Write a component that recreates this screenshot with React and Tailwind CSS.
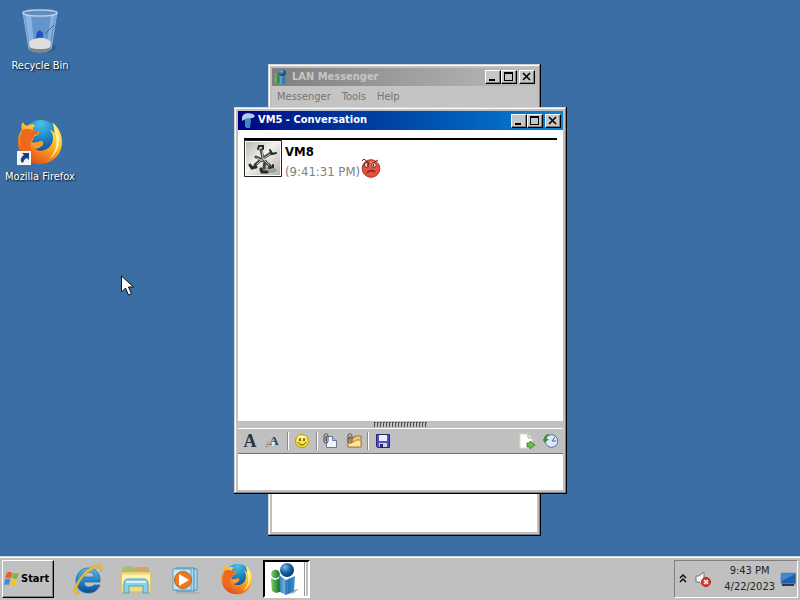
import React from "react";

function Firefox({ className }) {
  return (
    <svg viewBox="0 0 48 48" className={className} aria-hidden="true">
      <defs>
        <radialGradient id="ffGlobe" cx="0.5" cy="0.1" r="0.9">
          <stop offset="0" stopColor="#4fc0e8" />
          <stop offset="0.5" stopColor="#1b7fc0" />
          <stop offset="1" stopColor="#0c3f86" />
        </radialGradient>
        <linearGradient id="ffTail" x1="0.8" y1="0" x2="0.2" y2="1">
          <stop offset="0" stopColor="#fff27a" />
          <stop offset="0.4" stopColor="#fdb52b" />
          <stop offset="0.75" stopColor="#f0701c" />
          <stop offset="1" stopColor="#d8401b" />
        </linearGradient>
      </defs>
      <circle cx="25" cy="20" r="19" fill="url(#ffGlobe)" />
      <path d="M37 4c6 4 10 12 10 20 0 13-10 23-23 23S1 37 1 25c0-6 1-10 4-14-1-3 0-6 1-8 1 2 3 4 5 4 3-2 6-2 8 0-2 1-3 3-2 5l6 1c1 2-1 4-5 5-1 3-1 5-3 6 3 2 7 0 10-1 2 0 3 2 2 4-3 2-4 4-8 4 5 4 12 2 16-3 4-5 3-13-1-17 2 1 4 2 5 4 0-4-1-8-2-11z" fill="url(#ffTail)" />
      <path d="M39 7c4 5 6 11 5 18-1 8-5 13-11 17 6-6 9-13 8-21z" fill="#fff08a" />
      <path d="M5 12c4-2 9-2 12 0l6 1c0 2-2 4-5 4-1 3-2 5-3 6-3 4-1 10 4 13-9-1-15-7-16-14z" fill="#ee681f" />
      <path d="M15 24c4 2 7 0 10-1 2 0 3 2 2 4-3 2-5 4-9 3z" fill="#f99a31" />
    </svg>
  );
}

function RecycleBin() {
  return (
    <svg viewBox="0 0 40 46" className="h-[46px] w-10" aria-hidden="true">
      <ellipse cx="25" cy="40" rx="12" ry="4" fill="#24507f" opacity=".5" />
      <path d="M3 4l6 37c5 4 17 4 22 0l6-37z" fill="#6594cb" stroke="#94b8de" />
      <path d="M5 7l4 27h5L11 7z" fill="#9bc2e8" opacity=".7" />
      <path d="M31 7l-4 27h3l5-27z" fill="#a7cae9" opacity=".55" />
      <path d="M16 30l1-6 3-2 3 3v5z" fill="#1e51c4" />
      <path d="M25 26l9-9" stroke="#356ea9" />
      <path d="M9 34c3-4 6-2 9-4 5-1 10 1 13 4l-1 7c-5 3-15 3-20 0z" fill="#dcdedb" />
      <path d="M9 39c6 3 16 3 22 0l-1 3c-5 3-15 3-20 0z" fill="#7d8580" />
      <ellipse cx="20" cy="5" rx="17" ry="3" fill="#5f8cbd" stroke="#b9d0e6" strokeWidth="1.500" />
    </svg>
  );
}

function People({ className }) {
  return (
    <svg viewBox="0 0 34 34" className={className} aria-hidden="true">
      <defs>
        <linearGradient id="pBlue"><stop stopColor="#2c79b6" /><stop offset=".35" stopColor="#6bb4e2" /><stop offset=".6" stopColor="#2474b5" /><stop offset="1" stopColor="#3f92cb" /></linearGradient>
        <radialGradient id="pHead" cx=".35" cy=".3" r=".75"><stop stopColor="#79bde8" /><stop offset=".5" stopColor="#1d67a8" /><stop offset="1" stopColor="#0b3563" /></radialGradient>
        <linearGradient id="pGreen"><stop stopColor="#7ccc62" /><stop offset=".5" stopColor="#43a344" /><stop offset="1" stopColor="#1b6830" /></linearGradient>
      </defs>
      <path d="M18 32l6-4 6-1-5 4z" fill="#777" opacity=".6" />
      <path d="M2 16l4 2 5-2v14l-4 1-4-2z" fill="url(#pGreen)" />
      <circle cx="6.500" cy="12" r="4.300" fill="url(#pGreen)" />
      <path d="M10 13l7 5 9-4-1 15-8 4-6-3z" fill="url(#pBlue)" />
      <path d="M17 18v15" stroke="#164e85" opacity=".7" />
      <circle cx="18" cy="8" r="7" fill="url(#pHead)" />
    </svg>
  );
}

function ChatIcon() {
  return (
    <svg viewBox="0 0 16 16" className="size-4" aria-hidden="true">
      <path d="M5 7l2 1 4-1-1 8H7l-2-1z" fill="#3f86c8" />
      <circle cx="7.500" cy="5" r="3.500" fill="#4d8ccb" />
      <path d="M2 4l2-3 4-1 5 1 2 2-2 2-5 0-3 1-3 2z" fill="#b3c9e6" />
    </svg>
  );
}

function CaptionButton({ label, children }) {
  return (
    <button aria-label={label} className="flex h-[14px] w-4 items-center justify-center border border-t-white border-l-white border-r-black border-b-black bg-[#c6c6c6] shadow-[inset_-1px_-1px_#808080]">
      <svg viewBox="0 0 12 10" className="h-[10px] w-3" fill="none" stroke="#000" shapeRendering="crispEdges" aria-hidden="true">{children}</svg>
    </button>
  );
}

function CaptionButtons() {
  return (
    <div className="ml-auto flex pr-0.5">
      <CaptionButton label="Minimize"><path d="M2 8h6" strokeWidth="2" /></CaptionButton>
      <CaptionButton label="Maximize"><path d="M1.500 1v7.500h8V1" /><path d="M1 1h9" strokeWidth="2" /></CaptionButton>
      <div className="w-0.5" />
      <CaptionButton label="Close"><path d="M2 1l7 7M9 1L2 8" strokeWidth="1.600" shapeRendering="auto" /></CaptionButton>
    </div>
  );
}

const frame = "absolute flex flex-col bg-[#c0c0c0] p-1 shadow-[inset_-1px_-1px_#000,inset_1px_1px_#d4d4d4,inset_-2px_-2px_#808080,inset_2px_2px_#fff]";

function MainWindow() {
  return (
    <section className={`${frame} left-[268px] top-[64px] h-[472px] w-[273px]`}>
      <header className="flex h-[18px] shrink-0 items-center gap-0.5 bg-linear-to-r from-[#808080] to-[#bcbcbc] pl-0.5 text-[11px] font-bold text-[#c6c6c6]">
        <People className="size-4" />
        <h2>LAN Messenger</h2>
        <CaptionButtons />
      </header>
      <nav className="flex h-[22px] shrink-0 items-center gap-[11px] bg-[#c4c4c4] pl-[5px] text-[11px] text-[#77736f]">
        <button>Messenger</button>
        <button>Tools</button>
        <button>Help</button>
      </nav>
      <div className="flex-1 bg-white" />
    </section>
  );
}

function Avatar() {
  return (
    <svg viewBox="0 0 38 38" className="size-[38px] shrink-0" aria-hidden="true">
      <defs><linearGradient id="avBg" x2="1" y2="1"><stop stopColor="#b7b7b3" /><stop offset=".45" stopColor="#f0f0ed" /><stop offset="1" stopColor="#b5b3ae" /></linearGradient></defs>
      <path d="M.5.5h37v36H.5z" fill="#fff" stroke="#222" />
      <path d="M2 2h34v33H2z" fill="url(#avBg)" />
      <ellipse cx="24" cy="30" rx="9" ry="3" fill="#77756e" opacity=".5" />
      <g fill="none" strokeLinecap="round">
        <path d="M17 10l2 8-8 7M27 13l-9 6 8 7M12 17l9 4-1 7" stroke="#45443e" strokeWidth="3" />
        <path d="M18 11l1 7-6 6M26 14l-7 5 6 6M13 18l6 3" stroke="#c4c1b5" />
        <path d="M14 9l1-3 4 0v3" stroke="#292926" strokeWidth="2" />
        <path d="M26 10l2 4 4-1" stroke="#292926" strokeWidth="2" />
        <path d="M6 25l2 3 4-1" stroke="#292926" strokeWidth="3" />
        <path d="M17 29l1 3 5 0" stroke="#292926" strokeWidth="3" />
        <path d="M25 28l4-1v-2" stroke="#292926" strokeWidth="2" />
      </g>
    </svg>
  );
}

function Angry() {
  return (
    <svg viewBox="0 0 20 20" className="size-5" role="img" aria-label="Angry">
      <circle cx="10" cy="10.500" r="8.800" fill="#e5523d" stroke="#b62b20" />
      <ellipse cx="12" cy="6" rx="5" ry="3" fill="#fa9780" opacity=".6" />
      <path d="M1 3l2-2 6 5M12 5l5-3" stroke="#55221c" fill="none" />
      <circle cx="5.500" cy="7" r="2.300" fill="#f3d8d2" stroke="#60241d" /><circle cx="13" cy="7" r="2.300" fill="#f3d8d2" stroke="#60241d" />
      <path d="M6 7h1M12 7h1" stroke="#111" strokeWidth="1.500" />
      <path d="M6 15c2-3 6-3 8-1" stroke="#54201b" strokeWidth="1.300" fill="none" />
    </svg>
  );
}

function Tool({ label, children, className = "" }) {
  return (
    <button aria-label={label} className={`flex size-6 items-center justify-center ${className}`}>
      <svg viewBox="0 0 16 16" className="size-4" aria-hidden="true">{children}</svg>
    </button>
  );
}

function Divider() {
  return <div className="mx-0.5 h-[18px] w-px bg-white shadow-[-1px_0_#8a8a8a]" />;
}

const clip = <path d="M2 3v5c0 3 4 3 4 0V3c0-3-4-3-4 0M4 3v5" fill="none" stroke="#4b4b4b" />;

function Toolbar() {
  return (
    <div className="flex h-[26px] shrink-0 items-center border-t border-b border-t-white border-b-[#707070]">
      <button aria-label="Font" className="h-6 w-6 font-[Liberation_Serif,serif] text-[18px] leading-6 font-bold text-[#2c3444]">A</button>
      <button aria-label="Font colour" className="relative h-6 w-6 font-[Liberation_Serif,serif] text-[13px] leading-5 font-bold text-[#29464d]">
        <svg viewBox="0 0 24 24" className="absolute inset-0 size-6" aria-hidden="true"><path d="M3 18l3-6 2 1-3 6z" fill="#ca9776" /><path d="M7 14l3-4 5 5-4 3-4-2z" fill="#dce9f3" stroke="#7f9ba9" strokeWidth=".6" /></svg>
        <span className="relative">A</span>
      </button>
      <Divider />
      <Tool label="Smileys">
        <circle cx="7" cy="8" r="6.500" fill="#ffe438" stroke="#b39a14" />
        <ellipse cx="7" cy="4.500" rx="4" ry="2" fill="#fff8a9" />
        <path d="M5 5v3M9 5v3" stroke="#3f3710" strokeWidth="1.300" /><path d="M3 9c2 4 6 4 8 0" fill="none" stroke="#5e480e" />
      </Tool>
      <Divider />
      <div className="flex">
        <Tool label="Send file" className="-ml-0.5">
          <path d="M4.500 3.500h6l4 4v7h-10z" fill="#eef3ff" stroke="#6d7697" /><path d="M10.500 3.500v4h4" fill="#b8c5e4" stroke="#6d7697" />{clip}
        </Tool>
        <Tool label="Send folder">
          <path d="M2 5h6l1-2h6v11H2z" fill="#f4cc71" stroke="#9a742c" /><path d="M2 9h6l2-2h5v7H2z" fill="#ffe29a" stroke="#a88640" />{clip}
        </Tool>
      </div>
      <Divider />
      <Tool label="Save conversation">
        <path d="M1.500 1.500h13v13h-12l-1-1z" fill="#4c50c4" stroke="#25276f" /><path d="M4 2h8v6H4z" fill="#eef1fb" /><path d="M4 10h8v4H4z" fill="#d0d3e3" /><path d="M5 11h3v3H5z" fill="#27295f" />
      </Tool>
      <Tool label="Send" className="ml-auto">
        <path d="M1 1h8l4 4v10H1z" fill="#fff" stroke="#d1dfc6" /><path d="M9 1v4h4" fill="#e7ece4" stroke="#a7b19d" /><path d="M8 10h3V8l5 4-5 4v-2H8z" fill="#68c34c" stroke="#2c7c24" strokeWidth=".8" />
      </Tool>
      <Tool label="History">
        <circle cx="8.500" cy="8" r="6.300" fill="#dbe8fb" stroke="#5f6fa3" /><path d="M12 4L9 8h4" fill="none" stroke="#4166a7" /><path d="M7 1C3 1 1 3 1 6H-1l3 4 4-4H4c0-2 0-4 3-5z" fill="#478c38" />
      </Tool>
    </div>
  );
}

function ConversationWindow() {
  return (
    <section className={`${frame} left-[234px] top-[107px] h-[387px] w-[333px]`}>
      <header className="flex h-[19px] shrink-0 items-center gap-0.5 bg-linear-to-r from-[#000082] via-[#0047a8] to-[#1082d2] pl-0.5 text-[11px] font-bold text-white">
        <ChatIcon />
        <h1>VM5 - Conversation</h1>
        <CaptionButtons />
      </header>
      <div className="flex-1 bg-white px-1.5 pt-2">
        <div className="flex gap-[3px] border-t-2 border-black">
          <Avatar />
          <div className="pt-1 text-[13px] leading-4">
            <p className="font-bold text-black">VM8</p>
            <p className="flex items-start gap-px text-[#808080]"><span className="pt-1">(9:41:31 PM)</span><span className="-mt-0.5"><Angry /></span></p>
          </div>
        </div>
      </div>
      <div className="flex h-[7px] shrink-0 items-center justify-center">
        <svg viewBox="0 0 54 5" className="h-[5px] w-[54px]" aria-hidden="true">
          <path d="M0 2.500h54" stroke="#4e4e4e" strokeWidth="5" strokeDasharray="1 2" /><path d="M1 .5h53" stroke="#555" strokeDasharray="1 2" />
        </svg>
      </div>
      <Toolbar />
      <textarea aria-label="Message" className="block h-9 shrink-0 resize-none bg-white outline-none" />
    </section>
  );
}

function DesktopIcon({ label, children }) {
  return (
    <button className="flex w-20 flex-col items-center gap-1 text-[11px] leading-4 text-white [text-shadow:1px_1px_2px_#000]">
      {children}
      <span className="whitespace-nowrap">{label}</span>
    </button>
  );
}

function Taskbar() {
  return (
    <footer className="flex h-11 shrink-0 items-start border-t border-[#d4d4d4] bg-[#c0c0c0] px-0.5 pt-[3px] shadow-[inset_0_1px_#fff]">
      <button className="flex h-[38px] w-[52px] items-center gap-px border border-t-white border-l-white border-r-black border-b-black pl-px text-[11px] font-bold text-black shadow-[inset_-1px_-1px_#808080]">
        <svg viewBox="0 0 17 17" className="size-4" aria-hidden="true">
          <path d="M3 2c2-2 4-1 6 0L7 8C5 7 3 7 1 8z" fill="#e96128" /><path d="M10 2c2 1 4 1 6 0l-2 6c-2 1-4 0-6-1z" fill="#81b83b" /><path d="M1 9c2-1 4-1 6 0l-2 6c-2-1-3-1-5 0z" fill="#438bd0" /><path d="M8 9c2 1 4 1 6 0l-2 6c-2 1-4 0-6-1z" fill="#f2c331" />
        </svg>
        Start
      </button>
      <div className="flex items-center pl-[18px]">
        <button aria-label="Internet Explorer" className="mr-4 h-[38px] w-8">
          <svg viewBox="0 0 32 32" className="size-8" aria-hidden="true">
            <defs><linearGradient id="ie" x2="0" y2="1"><stop stopColor="#56baf0" /><stop offset=".6" stopColor="#197ac8" /><stop offset="1" stopColor="#0c4b8d" /></linearGradient></defs>
            <path d="M28 19H12c0 3 2 5 5 5 2 0 4-1 5-2h6c-2 5-6 8-12 8C9 30 4 25 4 18S9 5 16 5s13 5 12 14zM12 14h10c0-3-2-5-5-5s-5 2-5 5z" fill="url(#ie)" stroke="#176aa7" strokeWidth=".7" />
            <path d="M8 29c-5 4-8 1-4-8C10 10 20 1 28 2c4 1 2 5 1 7 0-3-1-5-4-4C18 6 10 14 6 22c-2 5-2 7 2 7z" fill="#edbd36" stroke="#d49b22" strokeWidth=".5" />
          </svg>
        </button>
        <button aria-label="Windows Explorer" className="mr-[19px] h-[38px] w-8">
          <svg viewBox="0 0 32 32" className="size-8" aria-hidden="true">
            <path d="M2 5l3-2h7l2 2h15v4H2z" fill="#a9bd73" /><path d="M15 4h13v5H15z" fill="#d4a367" /><path d="M1 9h30v20H1z" fill="#f1dc86" stroke="#d5b966" /><path d="M2 12h28v9H2z" fill="#fff2ae" />
            <path d="M4 30V20c0-3 2-4 5-4h14c3 0 5 1 5 4v10h-5v-7H9v7z" fill="#8bd0e9" stroke="#509fc1" /><path d="M6 19h20" stroke="#d0f2fc" strokeWidth="2" />
          </svg>
        </button>
        <button aria-label="Windows Media Player" className="mr-5 h-[38px] w-[30px]">
          <svg viewBox="0 0 30 32" className="h-8 w-[30px]" aria-hidden="true">
            <path d="M8 6h18v21H8z" fill="#b8dff1" stroke="#4998c1" /><path d="M5 5h18v23H5z" fill="#a8d6ec" stroke="#3c89b4" /><path d="M2 6h18v21H2z" fill="#c5e7f5" stroke="#5ba3c5" /><circle cx="12" cy="17" r="8.500" fill="#ed7a22" stroke="#c85c10" /><path d="M8 11v12l10-6z" fill="#fff" /><path d="M5 30h23" stroke="#90a9b4" />
          </svg>
        </button>
        <button aria-label="Mozilla Firefox" className="mr-2.5 h-[38px] w-8"><Firefox className="size-8" /></button>
        <button aria-label="LAN Messenger" className="h-[38px] w-[47px] border-2 border-r-white border-b-white border-t-black border-l-black bg-white pl-1 shadow-[inset_-2px_0_#c0c0c0,inset_-3px_0_#fff,inset_-4px_0_#999]"><People className="size-[34px]" /></button>
      </div>
      <div className="ml-auto flex h-[38px] w-[124px] items-center border border-t-[#808080] border-l-[#808080] border-r-white border-b-white text-[11px] leading-4 text-[#242424]">
        <button aria-label="Show hidden icons" className="ml-1 w-2">
          <svg viewBox="0 0 8 10" className="h-[10px] w-2" fill="none" stroke="#111" strokeWidth="1.500" aria-hidden="true"><path d="M1 4l3-3 3 3M1 8l3-3 3 3" /></svg>
        </button>
        <button aria-label="Volume: muted" className="ml-2 w-4">
          <svg viewBox="0 0 16 16" className="size-4" aria-hidden="true"><path d="M1 5h3l5-4v14l-5-4H1z" fill="#f5f5f5" stroke="#777" /><circle cx="11" cy="11" r="4.500" fill="#dc3b35" stroke="#b51d1d" /><path d="M9 9l4 4M13 9l-4 4" stroke="#fff" strokeWidth="1.500" /></svg>
        </button>
        <div className="ml-auto text-center whitespace-nowrap"><p>9:43 PM</p><p>4/22/2023</p></div>
        <button aria-label="Show desktop" className="mr-px ml-[5px] w-4">
          <svg viewBox="0 0 16 16" className="size-4" aria-hidden="true"><path d="M1 2h15v11H1z" fill="#225fae" stroke="#749bc5" /><path d="M2 3h13L2 10z" fill="#4387d0" /><path d="M2 13h12v2H2z" fill="#263b52" /></svg>
        </button>
      </div>
    </footer>
  );
}

export default function App() {
  return (
    <div className="flex h-screen flex-col overflow-hidden bg-[#3a6ea5] font-['Tahoma','DejaVu_Sans_Condensed','Noto_Sans',sans-serif]">
      <main className="relative min-h-0 flex-1">
        <div className="flex w-20 flex-col gap-[45px] pt-2">
          <DesktopIcon label="Recycle Bin"><RecycleBin /></DesktopIcon>
          <DesktopIcon label="Mozilla Firefox">
            <span className="relative"><Firefox className="size-[46px]" />
              <svg viewBox="0 0 14 14" className="absolute bottom-0 left-0 size-[14px]" aria-hidden="true"><path d="M0 0h14v14H0z" fill="#f4f4f4" /><path d="M5 2h7v7l-2-2c-3 1-3 3-4 5-4-2-2-6 1-8z" fill="#183e82" /></svg>
            </span>
          </DesktopIcon>
        </div>
        <MainWindow />
        <ConversationWindow />
        <svg viewBox="0 0 13 21" className="absolute top-[275px] left-[121px] h-[21px] w-[13px]" aria-hidden="true"><path d="M.5 1v16l4-4 3 7 3-1-3-7h5z" fill="#fff" stroke="#111" /></svg>
      </main>
      <Taskbar />
    </div>
  );
}
